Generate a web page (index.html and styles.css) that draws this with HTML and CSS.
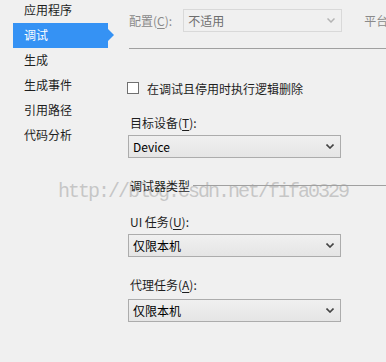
FILE: index.html
```html
<!DOCTYPE html>
<html lang="zh-CN">
<head>
    <meta charset="UTF-8">
    <title>调试</title>
    <link rel="stylesheet" href="styles.css">
</head>
<body>

    <div class="page">
        <!-- left navigation -->
        <ul class="nav">
            <li>应用程序</li>
            <li class="active">调试</li>
            <li>生成</li>
            <li>生成事件</li>
            <li>引用路径</li>
            <li>代码分析</li>
        </ul>

        <div class="content">
            <div class="config-row">
                <span class="label disabled">配置(<u>C</u>):</span>
                <div class="combo combo-disabled config-combo">
                    <span>不适用</span>
                    <svg class="chevron" width="8" height="5" viewBox="0 0 8 5"><polyline points="0.5,0.5 4,4 7.5,0.5" fill="none" stroke="#b4b4b4" stroke-width="1.5"/></svg>
                </div>
                <span class="label disabled platform">平台</span>
            </div>

            <div class="rule"></div>

            <label class="check-row">
                <span class="checkbox"></span>
                <span>在调试且停用时执行逻辑删除</span>
            </label>

            <div class="field-label first">目标设备(<u>T</u>):</div>
            <div class="combo">
                <span>Device</span>
                <svg class="chevron" width="8" height="5" viewBox="0 0 8 5"><polyline points="0.5,0.5 4,4 7.5,0.5" fill="none" stroke="#444" stroke-width="1.6"/></svg>
            </div>

            <div class="group-title">
                <span>调试器类型</span>
                <div class="group-line"></div>
            </div>

            <div class="field-label ui-label">UI 任务(<u>U</u>):</div>
            <div class="combo">
                <span>仅限本机</span>
                <svg class="chevron" width="8" height="5" viewBox="0 0 8 5"><polyline points="0.5,0.5 4,4 7.5,0.5" fill="none" stroke="#444" stroke-width="1.6"/></svg>
            </div>

            <div class="field-label agent-label">代理任务(<u>A</u>):</div>
            <div class="combo">
                <span>仅限本机</span>
                <svg class="chevron" width="8" height="5" viewBox="0 0 8 5"><polyline points="0.5,0.5 4,4 7.5,0.5" fill="none" stroke="#444" stroke-width="1.6"/></svg>
            </div>
        </div>
    </div>

    <div class="watermark">http://blog.csdn.net/fifa0329</div>

</body>
</html>
```

FILE: styles.css
```css
body {
    margin: 0;
    padding: 0;
    background-color: #f0f0f0;
    color: #1e1e1e;
    font-family: "Noto Sans CJK SC", "Noto Sans", sans-serif;
    font-size: 12px;
    width: 386px;
    height: 362px;
    overflow: hidden;
    position: relative;
}

.page {
    display: flex;
    align-items: flex-start;
}

/* left navigation */
.nav {
    list-style: none;
    margin: -2px 0 0 13px;
    padding: 0;
    width: 95px;
    flex-shrink: 0;
}

.nav li {
    height: 25px;
    line-height: 24px;
    padding-left: 11px;
    position: relative;
}

.nav li.active {
    background-color: #3592f4;
    color: #fff;
}

.nav li.active::after {
    content: "";
    position: absolute;
    top: 6px;
    right: -6px;
    border-top: 6px solid transparent;
    border-bottom: 6px solid transparent;
    border-left: 6px solid #3592f4;
}

.content {
    flex: 1;
    margin-left: 20px;
    min-width: 0;
}

.config-row {
    display: flex;
    align-items: center;
    margin-top: 9px;
    height: 23px;
    white-space: nowrap;
}

.label {
    padding-left: 1px;
}

.disabled {
    color: #8a8a8a;
}

.platform {
    margin-left: 21px;
}

.combo {
    display: flex;
    align-items: center;
    justify-content: space-between;
    box-sizing: border-box;
    width: 213px;
    height: 23px;
    padding: 0 6px 0 4px;
    border: 1px solid #acacac;
    background: linear-gradient(#f0f0f0, #e5e5e5);
    color: #000;
}

.combo-disabled {
    border-color: #d9d9d9;
    background: #f0f0f0;
    color: #6d6d6d;
}

.config-combo {
    width: 159px;
    margin-left: 11px;
    flex-shrink: 0;
}

.chevron {
    display: block;
}

.rule {
    margin-top: 16px;
    margin-left: 1px;
    height: 1px;
    background-color: #a0a0a0;
}

.check-row {
    display: flex;
    align-items: center;
    height: 16px;
    margin-top: 31px;
}

.checkbox {
    box-sizing: border-box;
    width: 12px;
    height: 12px;
    margin-left: -1px;
    margin-right: 8px;
    border: 1px solid #707070;
    background-color: #fff;
}

.field-label {
    height: 16px;
    line-height: 16px;
    padding-left: 2px;
    margin-top: 19px;
    margin-bottom: 4px;
}

.ui-label {
    margin-top: 22px;
}

.agent-label {
    margin-top: 20px;
    margin-bottom: 6px;
}

.group-title {
    display: flex;
    align-items: center;
    height: 16px;
    margin-top: 19px;
    margin-bottom: -1px;
    padding-left: 2px;
    position: relative;
    z-index: 1;
}

.group-line {
    flex: 1;
    height: 1px;
    margin-left: 3px;
    background-color: #a0a0a0;
}

u {
    text-decoration-thickness: 1px;
    text-underline-offset: 2px;
}

/* blog watermark over the page */
.watermark {
    position: absolute;
    left: 58px;
    top: 180px;
    font-family: "Liberation Mono", monospace;
    font-size: 20px;
    letter-spacing: -2px;
    color: rgba(180, 180, 180, 0.7);
    white-space: nowrap;
    pointer-events: none;
}
```
